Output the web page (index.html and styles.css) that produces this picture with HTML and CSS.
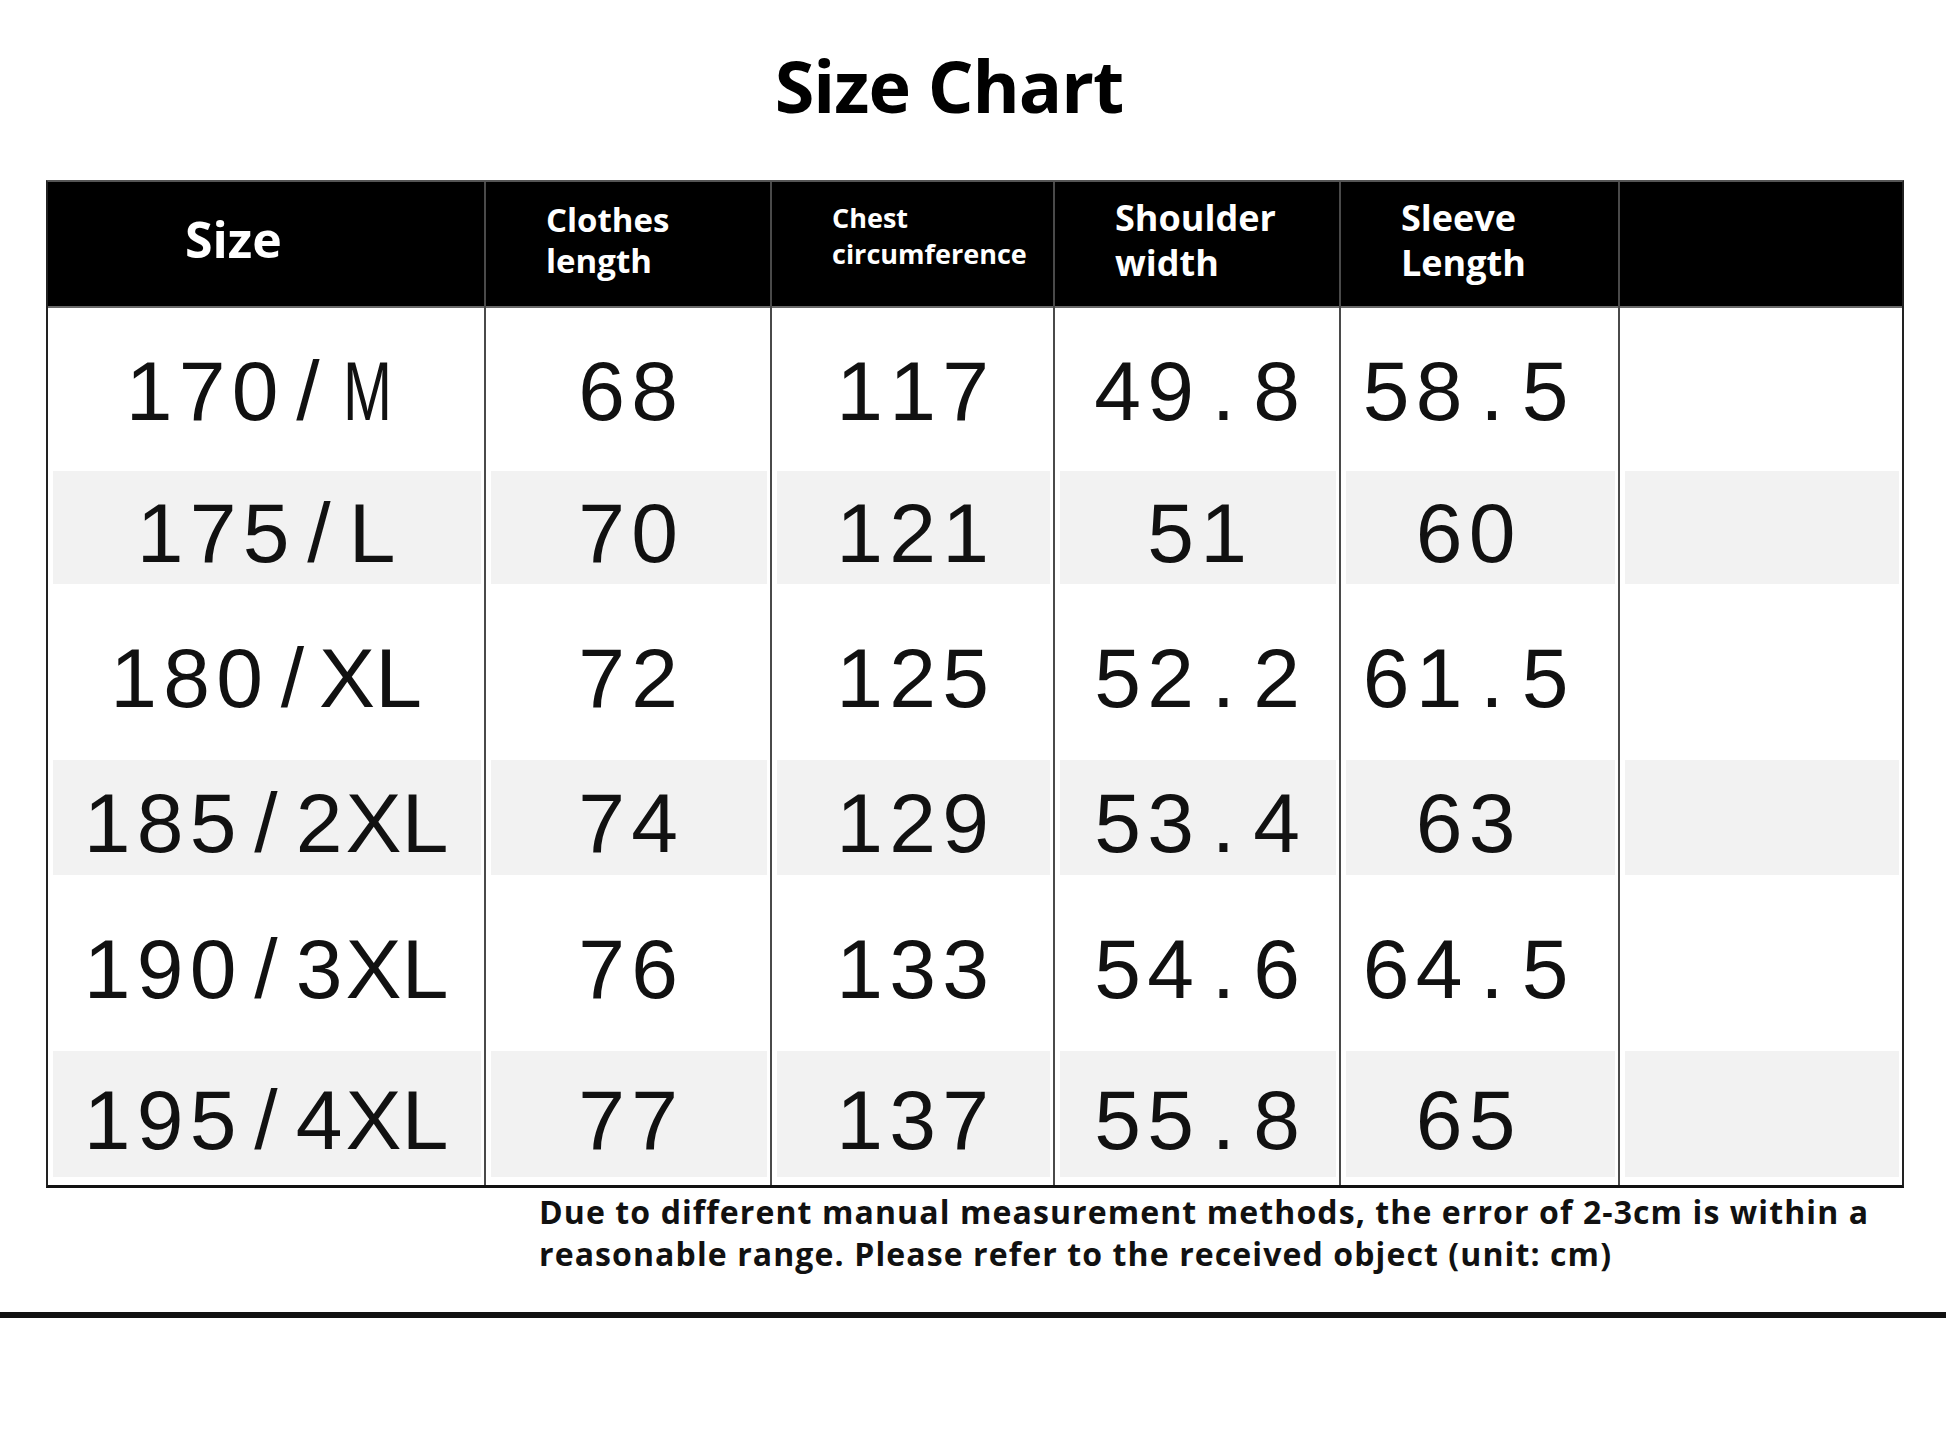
FILE: index.html
```html
<!DOCTYPE html>
<html lang="en">
<head>
<meta charset="utf-8">
<title>Size Chart</title>
<link rel="stylesheet" href="styles.css">
</head>
<body>
<div class="page">
  <h1 class="title">Size Chart</h1>
  <div class="chart">
    <div class="hd hd-size">Size</div>
    <div class="hd hd-clothes">Clothes<br>length</div>
    <div class="hd hd-chest">Chest<br>circumference</div>
    <div class="hd hd-big">Shoulder<br>width</div>
    <div class="hd hd-big">Sleeve<br>Length</div>
    <div class="hd"></div>

    <div class="c c1m"><span>1</span><span>7</span><span>0</span><span>/</span><span class="narrow">M</span></div>
    <div class="c"><span>6</span><span>8</span></div>
    <div class="c"><span>1</span><span>1</span><span>7</span></div>
    <div class="c"><span>4</span><span>9</span><span>.</span><span>8</span></div>
    <div class="c c5"><span>5</span><span>8</span><span>.</span><span>5</span></div>
    <div class="c"></div>

    <div class="c g"><span>1</span><span>7</span><span>5</span><span>/</span><span>L</span></div>
    <div class="c g"><span>7</span><span>0</span></div>
    <div class="c g"><span>1</span><span>2</span><span>1</span></div>
    <div class="c g"><span>5</span><span>1</span></div>
    <div class="c c5 g"><span>6</span><span>0</span></div>
    <div class="c g"></div>

    <div class="c"><span>1</span><span>8</span><span>0</span><span>/</span><span>X</span><span>L</span></div>
    <div class="c"><span>7</span><span>2</span></div>
    <div class="c"><span>1</span><span>2</span><span>5</span></div>
    <div class="c"><span>5</span><span>2</span><span>.</span><span>2</span></div>
    <div class="c c5"><span>6</span><span>1</span><span>.</span><span>5</span></div>
    <div class="c"></div>

    <div class="c g"><span>1</span><span>8</span><span>5</span><span>/</span><span>2</span><span>X</span><span>L</span></div>
    <div class="c g"><span>7</span><span>4</span></div>
    <div class="c g"><span>1</span><span>2</span><span>9</span></div>
    <div class="c g"><span>5</span><span>3</span><span>.</span><span>4</span></div>
    <div class="c c5 g"><span>6</span><span>3</span></div>
    <div class="c g"></div>

    <div class="c"><span>1</span><span>9</span><span>0</span><span>/</span><span>3</span><span>X</span><span>L</span></div>
    <div class="c"><span>7</span><span>6</span></div>
    <div class="c"><span>1</span><span>3</span><span>3</span></div>
    <div class="c"><span>5</span><span>4</span><span>.</span><span>6</span></div>
    <div class="c c5"><span>6</span><span>4</span><span>.</span><span>5</span></div>
    <div class="c"></div>

    <div class="c g"><span>1</span><span>9</span><span>5</span><span>/</span><span>4</span><span>X</span><span>L</span></div>
    <div class="c g"><span>7</span><span>7</span></div>
    <div class="c g"><span>1</span><span>3</span><span>7</span></div>
    <div class="c g"><span>5</span><span>5</span><span>.</span><span>8</span></div>
    <div class="c c5 g"><span>6</span><span>5</span></div>
    <div class="c g"></div>
  </div>
  <p class="note">Due to different manual measurement methods, the error of 2-3cm is within a<br>reasonable range. Please refer to the received object (unit: cm)</p>
  <div class="rule"></div>
</div>
</body>
</html>
```

FILE: styles.css
```css
html, body {
  margin: 0;
  padding: 0;
  background: #ffffff;
}

.page {
  width: 1946px;
  height: 1439px;
  overflow: hidden;
  font-family: "Open Sans", "Liberation Sans", sans-serif;
  color: #111111;
}

.title {
  margin: 49px 0 0 0;
  padding-right: 48px;
  font-size: 72px;
  line-height: 72px;
  font-weight: 700;
  letter-spacing: -1px;
  text-align: center;
  color: #000000;
}

.chart {
  margin: 59px 0 0 46px;
  width: 1854px;
  display: grid;
  grid-template-columns: 436px 284px 281px 284px 277px 282px;
  grid-template-rows: 126px 160px 124px 165px 126px 165px 137px;
  column-gap: 2px;
  background: #4a4a4a;
  border-top: 2px solid #555555;
  border-left: 2px solid #222222;
  border-right: 2px solid #222222;
  border-bottom: 3px solid #111111;
}

.hd {
  background: #000000;
  color: #ffffff;
  font-weight: 700;
  border-bottom: 2px solid #6a6a6a;
  box-sizing: border-box;
  padding-left: 60px;
}

.hd-size {
  font-size: 50px;
  line-height: 60px;
  padding-top: 27px;
  padding-left: 137px;
}

.hd-clothes {
  font-size: 33px;
  line-height: 41px;
  padding-top: 17px;
}

.hd-chest {
  font-size: 27px;
  line-height: 36px;
  padding-top: 18px;
}

.hd-big {
  font-size: 36px;
  line-height: 45px;
  padding-top: 13px;
}

.c {
  background: #ffffff;
  display: flex;
  align-items: center;
  justify-content: center;
  font-family: "Liberation Sans", Arial, sans-serif;
  font-size: 84px;
  line-height: 1;
  color: #111111;
  padding-top: 6px;
  box-sizing: border-box;
}

.c span {
  display: inline-block;
  width: 53px;
  text-align: center;
}

.c span.narrow {
  transform: scaleX(0.7);
}

.c1m {
  padding-right: 22px;
}

.c5 {
  padding-right: 28px;
}

.g {
  background: #f2f2f2;
  box-shadow: inset 5px 3px 0 #ffffff, inset -3px -8px 0 #ffffff;
}

.note {
  margin: 3px 0 0 539px;
  font-size: 32px;
  line-height: 42px;
  font-weight: 700;
  letter-spacing: 1.1px;
  white-space: nowrap;
  color: #111111;
}

.rule {
  margin-top: 37px;
  height: 6px;
  background: #111111;
}
```
